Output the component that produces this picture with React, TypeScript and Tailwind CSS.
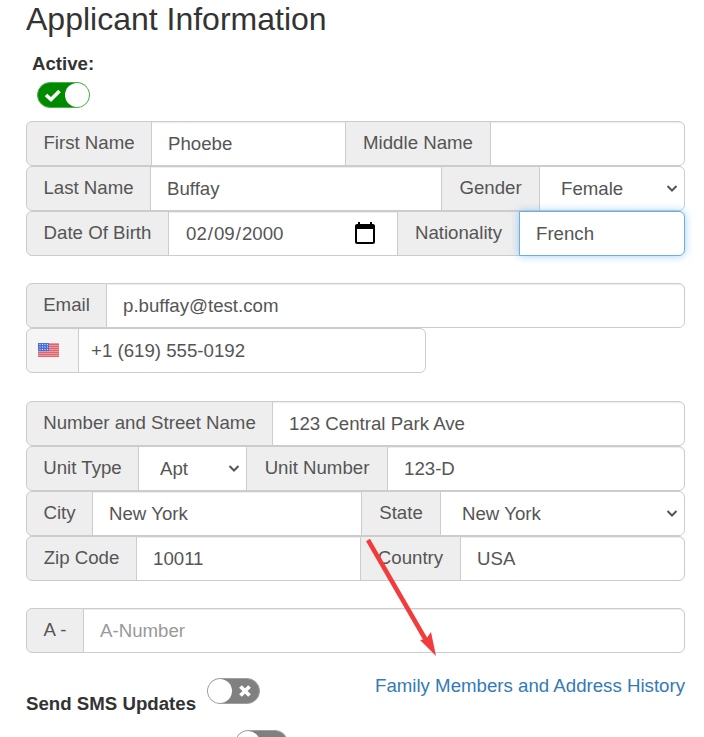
import React from "react";

const noop = () => {};

const Addon = ({ w, children, light }: { w: string; children: React.ReactNode; light?: boolean }) => (
  <span className={`${w} shrink-0 h-[45px] flex items-center justify-center whitespace-nowrap border border-[#ccc] -ml-px first:ml-0 first:rounded-l-[6px] pb-[3px] ${light ? "bg-[#f5f5f5]" : "bg-[#eee]"}`}>
    {children}
  </span>
);

const Field = ({ value, placeholder, focus, type = "text", last, w = "flex-1" }: { value?: string; placeholder?: string; focus?: boolean; type?: string; last?: boolean; w?: string }) => (
  <input
    onChange={noop}
    type={type}
    value={value ?? ""}
    placeholder={placeholder}
    className={`${w} min-w-0 h-[45px] px-[16px] border -ml-px bg-white outline-none placeholder:text-[#999] text-[#555] [&::-webkit-calendar-picker-indicator]:w-[26px] [&::-webkit-calendar-picker-indicator]:h-[26px] [&::-webkit-calendar-picker-indicator]:p-0 [&::-webkit-calendar-picker-indicator]:mr-[3px] ${last ? "rounded-r-[6px]" : ""} ${focus ? "relative z-10 border-[#66afe9] shadow-[0_0_8px_rgba(102,175,233,0.6)]" : "border-[#ccc] shadow-[inset_0_1px_1px_rgba(0,0,0,0.075)]"}`}
  />
);

const Select = ({ value, w, last }: { value: string; w: string; last?: boolean }) => (
  <span className={`${w} relative shrink-0 -ml-px`}>
    <select
      value={value}
      onChange={noop}
      className={`appearance-none w-full h-[45px] pl-[21px] pr-[24px] border border-[#ccc] bg-white outline-none text-[#555] ${last ? "rounded-r-[6px]" : ""}`}
    >
      <option>{value}</option>
    </select>
    <svg className="absolute right-[7px] top-[18px] pointer-events-none" width="12" height="9" viewBox="0 0 12 9" aria-hidden="true">
      <path d="M1.5 2 L6 6.5 L10.5 2" fill="none" stroke="#555" strokeWidth="2" />
    </svg>
  </span>
);

const Row = ({ children, className = "" }: { children: React.ReactNode; className?: string }) => (
  <div className={`flex items-stretch ${className}`}>{children}</div>
);

const Toggle = ({ on }: { on?: boolean }) =>
  on ? (
    <span className="w-[53px] h-[26px] rounded-full bg-[#008a00] border border-[#4cae4c] flex items-center justify-between shrink-0">
      <svg width="18" height="14" viewBox="0 0 18 14" className="ml-[6px]" aria-hidden="true">
        <path d="M2 7 L7 11.5 L15.5 3" fill="none" stroke="#fff" strokeWidth="3.6" />
      </svg>
      <span className="w-[24px] h-[24px] rounded-full bg-white" />
    </span>
  ) : (
    <span className="w-[53px] h-[26px] rounded-full bg-[#808080] border border-[#a0a0a0] flex items-center justify-between shrink-0">
      <span className="w-[24px] h-[24px] rounded-full bg-white" />
      <svg width="14" height="14" viewBox="0 0 14 14" className="mr-[7px]" aria-hidden="true">
        <path d="M2.5 2.5 L11.5 11.5 M11.5 2.5 L2.5 11.5" fill="none" stroke="#fff" strokeWidth="3.8" />
      </svg>
    </span>
  );

const Flag = () => (
  <svg width="21" height="15" viewBox="0 0 21 15" aria-hidden="true">
    <rect width="21" height="15" fill="#f3f3f3" />
    {[0, 2, 4, 6, 8, 10, 12].map((y) => (
      <rect key={y} y={y + 0.5} width="21" height="1.3" fill="#d9434e" />
    ))}
    <rect width="11" height="8" fill="#4a70d8" />
    {[1.5, 4, 6.5].map((y) =>
      [2, 4.5, 7, 9.5].map((x) => <rect key={`${x}-${y}`} x={x - 0.5} y={y - 0.5} width="1" height="1" fill="#dfe6fb" />)
    )}
  </svg>
);

export default function App() {
  return (
    <div className="relative h-[737px] w-[704px] overflow-hidden bg-white text-[18.66px] leading-[25px] text-[#555] font-['Liberation_Sans',Arial,sans-serif]">
      <div className="pl-[26px] pr-[19px]">
        <h1 className="text-[32px] leading-[38px] text-[#333] mt-0">Applicant Information</h1>
        <div className="ml-[6px] mt-[13px] font-bold text-[#333] leading-[25px]">Active:</div>
        <div className="ml-[11px] mt-[6px]">
          <Toggle on />
        </div>

        <div className="mt-[13px]">
          <Row>
            <Addon w="w-[126px]">First Name</Addon>
            <Field value="Phoebe" />
            <Addon w="w-[146px]">Middle Name</Addon>
            <Field last />
          </Row>
          <Row>
            <Addon w="w-[125px]">Last Name</Addon>
            <Field value="Buffay" />
            <Addon w="w-[99px]">Gender</Addon>
            <Select value="Female" w="w-[146px]" last />
          </Row>
          <Row>
            <Addon w="w-[143px]">Date Of Birth</Addon>
            <Field type="date" value="2000-02-09" />
            <Addon w="w-[123px]">Nationality</Addon>
            <Field value="French" focus last w="w-[166px] shrink-0" />
          </Row>
        </div>

        <div className="mt-[27px]">
          <Row>
            <Addon w="w-[81px]">Email</Addon>
            <Field value="p.buffay@test.com" last />
          </Row>
          <Row className="w-[400px]">
            <Addon w="w-[53px]" light>
              <span className="pt-[3px] mr-[8px] flex"><Flag /></span>
            </Addon>
            <input
              onChange={noop}
              value="+1 (619) 555-0192"
              className="min-w-0 flex-1 h-[45px] pl-[12px] border border-[#ccc] -ml-px rounded-r-[6px] outline-none text-[#555]"
            />
          </Row>
        </div>

        <div className="mt-[28px]">
          <Row>
            <Addon w="w-[247px]">Number and Street Name</Addon>
            <Field value="123 Central Park Ave" last />
          </Row>
          <Row>
            <Addon w="w-[113px]">Unit Type</Addon>
            <Select value="Apt" w="w-[109px]" />
            <Addon w="w-[142px]">Unit Number</Addon>
            <Field value="123-D" last />
          </Row>
          <Row>
            <Addon w="w-[67px]">City</Addon>
            <Field value="New York" />
            <Addon w="w-[80px]">State</Addon>
            <Select value="New York" w="w-[245px]" last />
          </Row>
          <Row>
            <Addon w="w-[111px]">Zip Code</Addon>
            <Field value="10011" />
            <Addon w="w-[101px]">Country</Addon>
            <Field value="USA" last />
          </Row>
        </div>

        <div className="mt-[27px]">
          <Row>
            <Addon w="w-[58px]">A -</Addon>
            <Field placeholder="A-Number" last />
          </Row>
        </div>

        <div className="mt-[25px] flex items-start justify-between">
          <div className="flex items-start gap-[11px]">
            <span className="mt-[13px] font-bold text-[#333]">Send SMS Updates</span>
            <Toggle />
          </div>
          <a className="-mt-[5px] text-[#337ab7]">Family Members and Address History</a>
        </div>
        <div className="mt-[14px] ml-[209px]">
          <Toggle />
        </div>
      </div>

      <svg className="absolute left-[360px] top-[532px]" width="84" height="130" viewBox="0 0 84 130" aria-hidden="true">
        <path d="M8 8 L67 110" stroke="#f23c3c" strokeWidth="4.5" fill="none" />
        <path d="M76 124 L60 108 L66 107 L71 100 Z" fill="#f23c3c" />
      </svg>
    </div>
  );
}
